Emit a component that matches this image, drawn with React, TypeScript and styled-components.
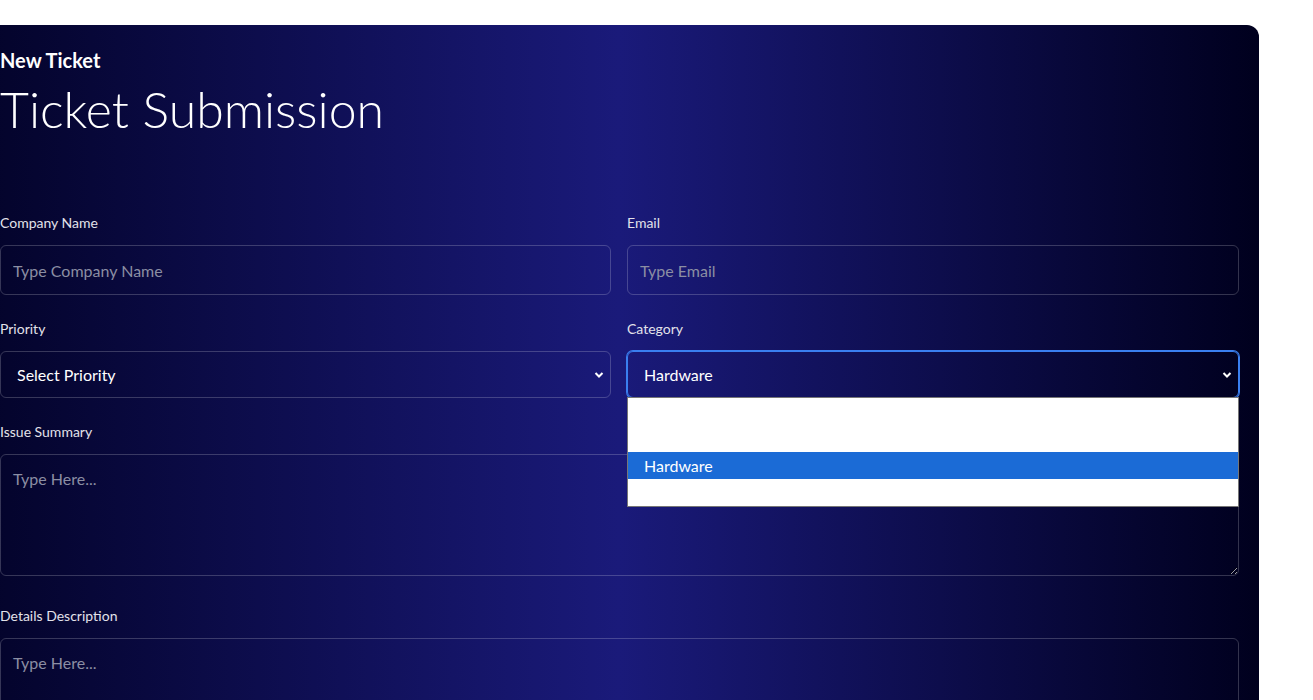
import React, { useState } from "react";
import styled, { createGlobalStyle } from "styled-components";

const GlobalStyle = createGlobalStyle`
   html, body {
      margin: 0;
      padding: 0;
      background: #ffffff;
      overflow: hidden;
   }
   body {
      font-family: Lato, "Open Sans", sans-serif;
   }
`;

function App() {
   const [category, setCategory] = useState("Hardware");
   const categories = ["", "", "Hardware", ""];

   return (
      <Page>
         <GlobalStyle />
         <Panel>
            <SubTitle>New Ticket</SubTitle>
            <Title>Ticket Submission</Title>
            <Form>
               <Row>
                  <Field>
                     <Label>Company Name</Label>
                     <Input placeholder="Type Company Name" />
                  </Field>
                  <Field>
                     <Label>Email</Label>
                     <Input placeholder="Type Email" />
                  </Field>
               </Row>
               <Row>
                  <Field>
                     <Label>Priority</Label>
                     <SelectBox>
                        <span>Select Priority</span>
                        <Chevron />
                     </SelectBox>
                  </Field>
                  <Field>
                     <Label>Category</Label>
                     <SelectWrap>
                        <SelectBox $focused>
                           <span>{category}</span>
                           <Chevron />
                        </SelectBox>
                        <Options>
                           {categories.map((c, index) => (
                              <Option
                                 key={index}
                                 $active={c == category}
                                 onClick={() => c && setCategory(c)}
                              >
                                 {c}
                              </Option>
                           ))}
                        </Options>
                     </SelectWrap>
                  </Field>
               </Row>
               <Field>
                  <Label>Issue Summary</Label>
                  <TextArea placeholder="Type Here..." rows={5} />
               </Field>
               <Field>
                  <Label>Details Description</Label>
                  <TextArea placeholder="Type Here..." rows={5} />
               </Field>
            </Form>
         </Panel>
      </Page>
   );
}

function Chevron() {
   return (
      <svg width="10" height="8" viewBox="0 0 10 8">
         <path d="M1.5 2 L5 5.5 L8.5 2" fill="none" stroke="#ffffff" strokeWidth="2" />
      </svg>
   );
}

export default App;

const Page = styled.div`
   padding-top: 25px;
   width: 1313px;
   height: 700px;
   box-sizing: border-box;
`;

const Panel = styled.div`
   margin-left: -20px;
   width: 1279px;
   box-sizing: border-box;
   min-height: 800px;
   padding: 22px 20px 40px;
   border-radius: 0 12px 0 0;
   background: linear-gradient(90deg, #03032a 0%, #1a1a7a 50%, #00001e 100%);
   color: #ffffff;
`;

const SubTitle = styled.h3`
   margin: 0;
   font-size: 20px;
   font-weight: 700;
   line-height: 26px;
`;

const Title = styled.h1`
   margin: 6px 0 0;
   font-size: 50px;
   font-weight: 300;
   line-height: 60px;
`;

const Form = styled.div`
   margin-top: 74px;
   display: flex;
   flex-direction: column;
   gap: 24px;
`;

const Row = styled.div`
   display: grid;
   grid-template-columns: 611px 612px;
   gap: 16px;
`;

const Field = styled.div`
   display: flex;
   flex-direction: column;
`;

const Label = styled.label`
   font-size: 14px;
   line-height: 20px;
   color: #e2e2ea;
   margin-bottom: 12px;
`;

const Input = styled.input`
   height: 50px;
   box-sizing: border-box;
   padding: 0 12px;
   border: 1px solid rgba(255, 255, 255, 0.2);
   border-radius: 6px;
   background: transparent;
   color: #ffffff;
   font-family: inherit;
   font-size: 16px;
   outline: none;
   &::placeholder {
      color: #8b8ea3;
   }
`;

const SelectWrap = styled.div`
   position: relative;
`;

const SelectBox = styled.div<{ $focused?: boolean }>`
   height: 47px;
   box-sizing: border-box;
   padding: 0 6px 0 16px;
   display: flex;
   align-items: center;
   justify-content: space-between;
   border: 1px solid rgba(255, 255, 255, 0.2);
   border-radius: 6px;
   font-size: 16px;
   color: #ffffff;
   cursor: pointer;
   box-shadow: ${(p) => (p.$focused ? "0 0 0 1px #3a7ff0" : "none")};
   border-color: ${(p) => (p.$focused ? "#3a7ff0" : "rgba(255, 255, 255, 0.2)")};
`;

const Options = styled.div`
   position: absolute;
   top: calc(100% - 1px);
   left: 0;
   right: 0;
   background: #ffffff;
   border: 1px solid #767676;
   z-index: 5;
`;

const Option = styled.div<{ $active?: boolean }>`
   height: 27px;
   line-height: 27px;
   padding-left: 16px;
   font-size: 16px;
   color: ${(p) => (p.$active ? "#ffffff" : "#000000")};
   background: ${(p) => (p.$active ? "#1b6bd6" : "transparent")};
`;

const TextArea = styled.textarea`
   height: 122px;
   box-sizing: border-box;
   margin: 0 0 6px;
   padding: 14px 12px;
   border: 1px solid rgba(255, 255, 255, 0.2);
   border-radius: 6px;
   background: transparent;
   color: #ffffff;
   font-family: inherit;
   font-size: 16px;
   resize: vertical;
   outline: none;
   &::placeholder {
      color: #8b8ea3;
   }
`;
